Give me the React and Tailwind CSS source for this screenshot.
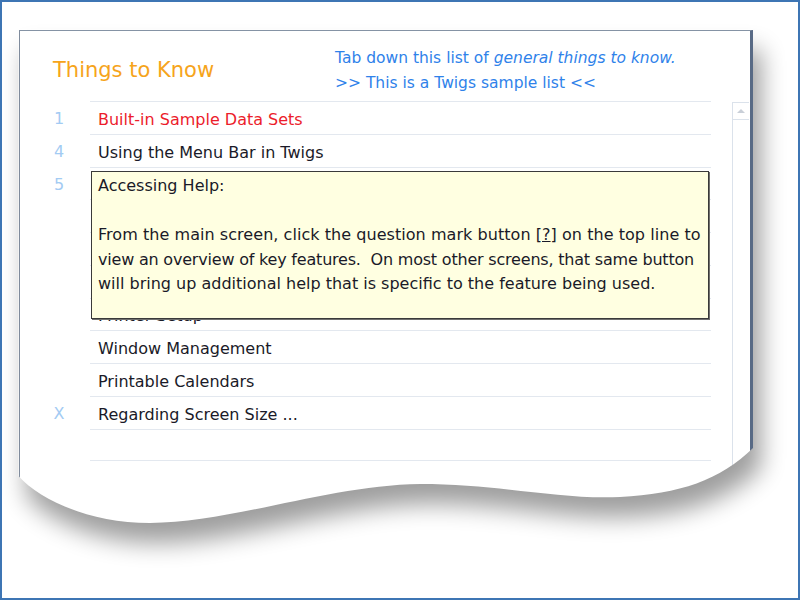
import React from "react";

const PAPER =
  "M 18.5 29.5 L 753 29.5 L 753 448 C 720 480, 680 494, 620 497 C 560 500, 500 484, 420 484 C 330 485, 230 523, 150 523 C 90 523, 40 500, 18.5 476 Z";

const rows = [
  { n: "1", t: "Built-in Sample Data Sets", red: true },
  { n: "4", t: "Using the Menu Bar in Twigs" },
  { n: "5", t: "" },
  { n: "", t: "" },
  { n: "", t: "" },
  { n: "", t: "" },
  { n: "", t: "Printer Setup" },
  { n: "", t: "Window Management" },
  { n: "", t: "Printable Calendars" },
  { n: "X", t: "Regarding Screen Size ..." },
  { n: "", t: "" },
];

export default function App() {
  return (
    <div className="relative w-[800px] h-[600px] bg-white overflow-hidden font-['DejaVu_Sans',sans-serif] pt-[30px] pl-[19px]">
      {/* window */}
      <div className="w-[734px] h-[500px] border-l border-t border-l-[#7f8b9c] border-t-[#8593a5] border-r-[3px] border-r-[#586a85] flex flex-col bg-white">
        {/* header */}
        <div className="h-[70px] flex shrink-0">
          <div className="w-[315px] pl-[33px] pt-[27px] text-[21px] leading-[24px] text-[#f6a41b]">
            Things to Know
          </div>
          <div className="pt-[15px] text-[15.5px] leading-[25px] text-[#2f82ea]">
            <div>
              Tab down this list of <i>general things to know.</i>
            </div>
            <div>&gt;&gt; This is a Twigs sample list &lt;&lt;</div>
          </div>
        </div>
        {/* body */}
        <div className="flex flex-1">
          <div className="relative w-[691px]">
            {rows.map((r, i) => (
              <div key={i} className="flex h-[32.75px]">
                <div className="w-[70px] flex items-center pt-[4px]">
                  <span className="ml-[33px] w-[12px] text-center text-[16px] text-[#a3cbf3]">
                    {r.n}
                  </span>
                </div>
                <div
                  className={
                    "flex-1 flex items-center pl-[8px] pt-[4px] border-t border-[#e3e8ef] text-[16px] " +
                    (r.red ? "text-[#ec1c2b]" : "text-[#1a1a28]") +
                    (i === rows.length - 1 ? " border-b" : "")
                  }
                >
                  {r.t}
                </div>
              </div>
            ))}
            {/* tooltip */}
            <div className="absolute left-[71px] top-[70px] w-[618px] h-[148px] bg-[#ffffe1] border border-[#3a3a3a] shadow-[1px_1px_0_#707070] pl-[6px] pt-[2px] text-[16px] leading-[24.5px] text-[#1a1a28] whitespace-nowrap overflow-hidden">
              <div>Accessing Help:</div>
              <div>&nbsp;</div>
              <div className="tracking-[0.05px]">
                From the main screen, click the question mark button [<span className="underline">?</span>] on the top line to
              </div>
              <div className="tracking-[-0.2px]">view an overview of key features.&nbsp; On most other screens, that same button</div>
              <div>will bring up additional help that is specific to the feature being used.</div>
            </div>
          </div>
          {/* scrollbar */}
          <div className="ml-[21px] mt-[1px] w-[17px] border-l border-t border-[#dbe2eb] flex flex-col">
            <div className="h-[17px] border-b border-[#dbe2eb] flex items-center justify-center">
              <svg width="10" height="6" viewBox="0 0 10 6">
                <polygon points="1,5 5,1 9,5" fill="#c9cfd8" />
              </svg>
            </div>
          </div>
        </div>
      </div>

      {/* torn paper edge + shadow */}
      <svg className="absolute top-0 left-0 pointer-events-none" width="800" height="600">
        <defs>
          <filter id="sh" x="-20%" y="-20%" width="140%" height="140%">
            <feGaussianBlur stdDeviation="12" />
          </filter>
          <mask id="outside" maskUnits="userSpaceOnUse" x="0" y="0" width="800" height="600">
            <rect width="800" height="600" fill="white" />
            <path d={PAPER} fill="black" />
          </mask>
        </defs>
        <g mask="url(#outside)">
          <rect width="800" height="600" fill="white" />
          <path d={PAPER} transform="translate(8,20)" fill="#000" opacity="0.38" filter="url(#sh)" />
        </g>
      </svg>

      {/* frame border */}
      <div className="absolute inset-0 border-2 border-[#3d75b4] pointer-events-none" />
    </div>
  );
}
